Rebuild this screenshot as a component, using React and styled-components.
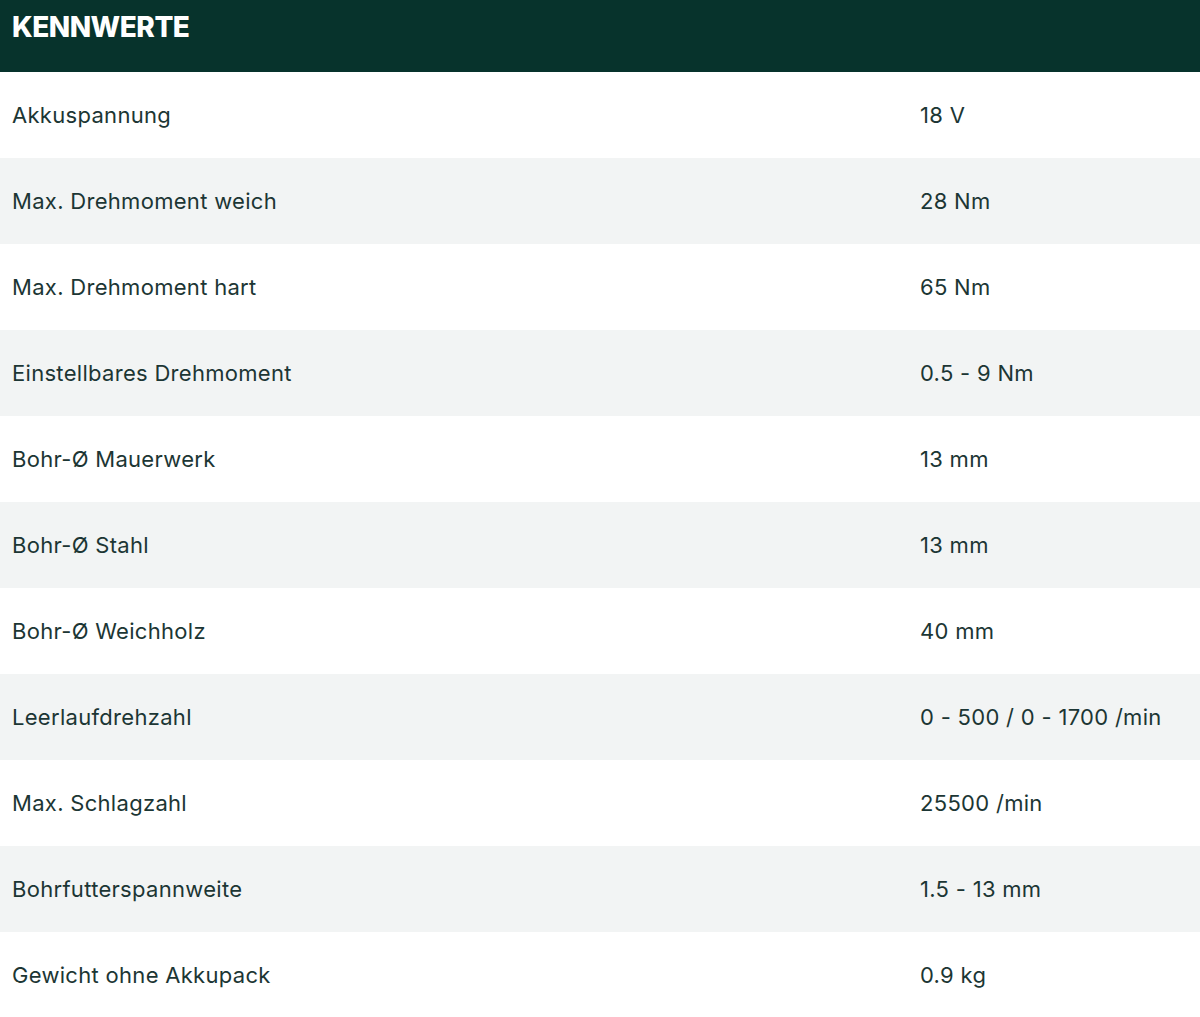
import React from "react";
import styled, { createGlobalStyle } from "styled-components";

const Global = createGlobalStyle`
  html, body { margin: 0; padding: 0; background: #ffffff; }
  body { font-family: "Open Sans", "Liberation Sans", sans-serif; }
`;

const Table = styled.section`
  width: 1200px;
  display: flex;
  flex-direction: column;
`;

const Header = styled.header`
  height: 72px;
  background: #07332c;
  display: flex;
  align-items: flex-start;
  padding: 9px 12px 0;
  box-sizing: border-box;
`;

const Title = styled.h2`
  margin: 0;
  color: #ffffff;
  font-family: Inter, "Noto Sans", sans-serif;
  font-weight: 800;
  font-size: 28px;
  line-height: 36px;
  letter-spacing: -0.5px;
`;

const Row = styled.div`
  height: 86px;
  display: grid;
  grid-template-columns: 908px 1fr;
  align-items: center;
  padding-left: 12px;
  box-sizing: border-box;
  background: ${(p) => (p.$alt ? "#f2f4f4" : "#ffffff")};
  color: #1c3634;
  font-family: Inter, "Noto Sans", sans-serif;
  font-size: 22px;
  letter-spacing: 0.3px;
`;

const Cell = styled.span`
  white-space: nowrap;
`;

const data = [
  ["Akkuspannung", "18 V"],
  ["Max. Drehmoment weich", "28 Nm"],
  ["Max. Drehmoment hart", "65 Nm"],
  ["Einstellbares Drehmoment", "0.5 - 9 Nm"],
  ["Bohr-Ø Mauerwerk", "13 mm"],
  ["Bohr-Ø Stahl", "13 mm"],
  ["Bohr-Ø Weichholz", "40 mm"],
  ["Leerlaufdrehzahl", "0 - 500 / 0 - 1700 /min"],
  ["Max. Schlagzahl", "25500 /min"],
  ["Bohrfutterspannweite", "1.5 - 13 mm"],
  ["Gewicht ohne Akkupack", "0.9 kg"],
];

export default function App() {
  return (
    <>
      <Global />
      <Table>
        <Header>
          <Title>KENNWERTE</Title>
        </Header>
        {data.map(([k, v], i) => (
          <Row key={k} $alt={i % 2 === 1}>
            <Cell>{k}</Cell>
            <Cell>{v}</Cell>
          </Row>
        ))}
      </Table>
    </>
  );
}
